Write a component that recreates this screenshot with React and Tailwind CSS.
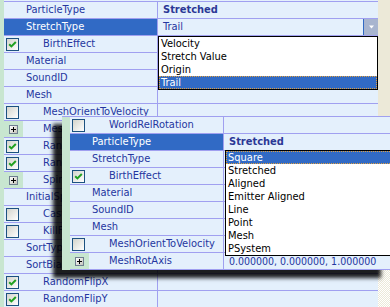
import React from 'react';

const bgRows = [
  { name: 'ParticleType', value: 'Stretched', bold: true },
  { name: 'StretchType', selected: true, value: 'Trail', combo: true },
  { name: 'BirthEffect', kind: 'check', checked: true },
  { name: 'Material' },
  { name: 'SoundID' },
  { name: 'Mesh' },
  { name: 'MeshOrientToVelocity', kind: 'check' },
  { name: 'MeshRotAxis', kind: 'plus' },
  { name: 'RandomRotation', kind: 'check', checked: true },
  { name: 'RandomRotDir', kind: 'check', checked: true },
  { name: 'SpinRate', kind: 'plus' },
  { name: 'InitialSpin' },
  { name: 'CastShadow', kind: 'check' },
  { name: 'KillFlag', kind: 'check' },
  { name: 'SortType' },
  { name: 'SortBias' },
  { name: 'RandomFlipX', kind: 'check', checked: true },
  { name: 'RandomFlipY', kind: 'check', checked: true },
];

const winRows = [
  { name: 'WorldRelRotation', kind: 'check' },
  { name: 'ParticleType', selected: true, value: 'Stretched', bold: true },
  { name: 'StretchType' },
  { name: 'BirthEffect', kind: 'check', checked: true },
  { name: 'Material' },
  { name: 'SoundID' },
  { name: 'Mesh' },
  { name: 'MeshOrientToVelocity', kind: 'check' },
  { name: 'MeshRotAxis', kind: 'plus', value: '0.000000, 0.000000, 1.000000', small: true },
];

const Check = ({ checked }) => (
  <span className="flex h-[13px] w-[13px] items-center justify-center border border-[#1c5180] bg-linear-to-br from-[#d4d4cc] to-white">
    {checked && (
      <svg width="9" height="9" viewBox="0 0 9 9">
        <path d="M1.2 4.2 L3.4 6.4 L7.8 2" fill="none" stroke="#21a121" strokeWidth="2" />
      </svg>
    )}
  </span>
);

const Plus = () => (
  <span className="flex h-[9px] w-[9px] items-center justify-center border border-[#6f7f90] bg-linear-to-br from-white to-[#c4c4ba]">
    <svg width="5" height="5" viewBox="0 0 5 5">
      <path d="M0 2.5H5M2.5 0V5" stroke="#000" strokeWidth="1" />
    </svg>
  </span>
);

const Row = ({ gutter, row }) => {
  const indent2 = row.kind === 'check' || row.kind === 'plus';
  return (
    <div className="flex h-[17px]">
      <div className={`${gutter} shrink-0 bg-[#c8e6d0]`} />
      <div className="flex min-w-0 flex-1 border-b border-[#a0a0f0]">
        <div
          className={`flex w-[154px] shrink-0 overflow-hidden border-r border-[#a0a0f0] ${
            row.selected ? 'bg-[#316ac5] text-white' : 'text-[#2536a0]'
          }`}
        >
          <div
            className={`flex w-[19px] shrink-0 items-center ${
              row.kind === 'plus' ? 'bg-[#c8e6d0] pl-[5px]' : 'pl-[2px]'
            }`}
          >
            {row.kind === 'check' && <Check checked={row.checked} />}
            {row.kind === 'plus' && <Plus />}
          </div>
          <span className={`${indent2 ? 'pl-[20px]' : 'pl-[3px]'} whitespace-nowrap leading-[16px]`}>
            {row.name}
          </span>
        </div>
        <div className="flex min-w-0 flex-1 text-[#2536a0]">
          <span
            className={`flex-1 whitespace-nowrap pl-[5px] leading-[16px] ${
              row.bold ? 'font-bold text-[#2b3896]' : row.small ? 'text-[10.5px]' : ''
            }`}
          >
            {row.value}
          </span>
          {row.combo && (
            <span className="flex w-[15px] items-center justify-center border-l border-[#316ac5] bg-[#a8b5cf]">
              <svg width="5" height="4" viewBox="0 0 5 4">
                <path d="M0 0.5H5L2.5 3.5Z" fill="#fff" />
              </svg>
            </span>
          )}
        </div>
      </div>
    </div>
  );
};

const List = ({ items, selected, className }) => (
  <div className={`absolute border border-black bg-white text-black ${className}`}>
    {items.map((it) => (
      <div
        key={it}
        className={`h-[13px] whitespace-nowrap pl-[2px] leading-[13px] ${
          it === selected ? 'bg-[#316ac5] text-white outline-1 -outline-offset-1 outline-dotted outline-[#e0a040]' : ''
        }`}
      >
        {it}
      </div>
    ))}
  </div>
);

export default function App() {
  return (
    <div className="relative h-[307px] w-[390px] overflow-hidden bg-[#ece9d8] font-['DejaVu_Sans_Condensed','Liberation_Sans',sans-serif] text-[11px]">
      <div className="flex h-full">
        {/* background grid */}
        <div className="w-[378px] shrink-0 bg-[#e4f0fc]">
          <div className="flex h-[2px]">
            <div className="w-[4px] shrink-0 bg-[#c8e6d0]" />
            <div className="flex-1 border-b border-[#a0a0f0]" />
          </div>
          {bgRows.map((r) => (
            <Row key={r.name} gutter="w-[4px]" row={r} />
          ))}
        </div>
        <div className="flex flex-1 flex-col">
          <div className="flex-1" />
          <div className="h-[37px] bg-[repeating-conic-gradient(#ece9d8_0%_25%,#ffffff_0%_50%)] bg-[length:2px_2px]" />
        </div>
      </div>

      <List
        className="left-[158px] top-[36px] w-[220px]"
        items={['Velocity', 'Stretch Value', 'Origin', 'Trail']}
        selected="Trail"
      />

      {/* floating window */}
      <div className="absolute left-[62px] top-[116px] w-[328px] border-t border-[#a0a0f0] bg-[#e4f0fc] shadow-[-9px_8px_4px_rgba(0,0,0,0.88)]">
        {winRows.map((r) => (
          <Row key={r.name} gutter="w-[8px]" row={r} />
        ))}
        <List
          className="left-[163px] top-[33px] w-[170px]"
          items={['Square', 'Stretched', 'Aligned', 'Emitter Aligned', 'Line', 'Point', 'Mesh', 'PSystem']}
          selected="Square"
        />
      </div>
    </div>
  );
}
